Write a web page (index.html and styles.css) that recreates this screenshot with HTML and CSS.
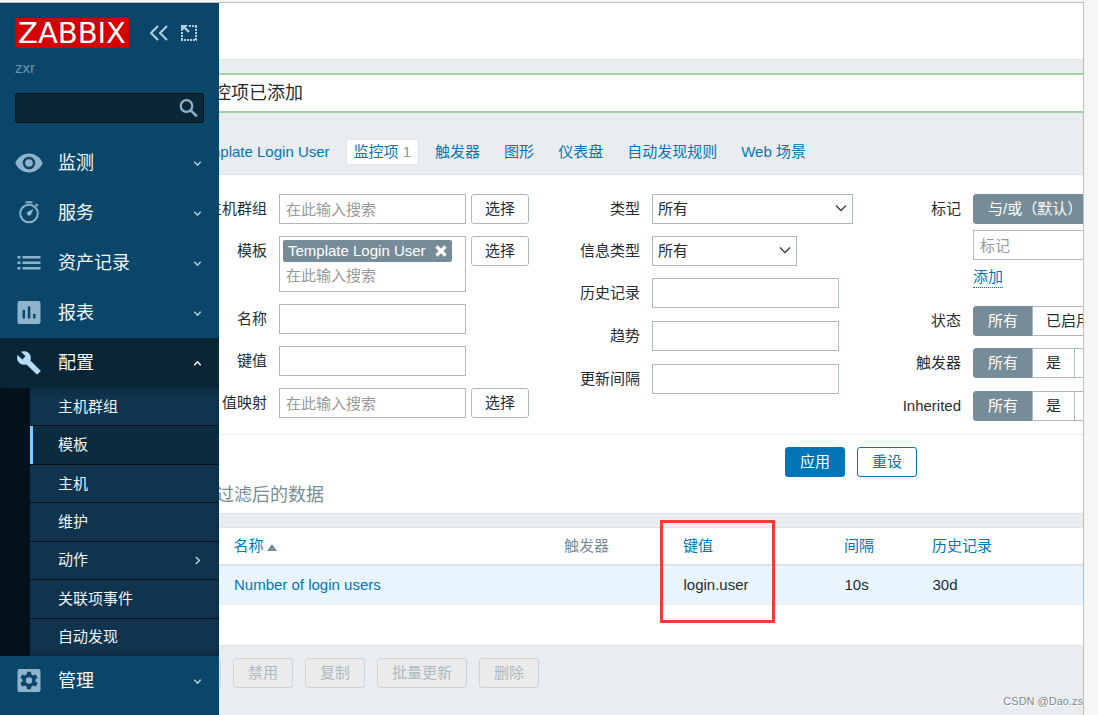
FILE: index.html
```
<!DOCTYPE html>
<html lang="zh-CN">
<head>
<meta charset="utf-8">
<title>配置监控项</title>
<link rel="stylesheet" href="styles.css">
</head>
<body>
<div class="frame">
  <aside class="sidebar">
    <div class="brand">
      <a class="logo" href="#">ZABBIX</a>
      <div class="brand-tools">
        <button class="icon-btn" type="button" aria-label="收起侧边栏">
          <svg width="20" height="18" viewBox="0 0 20 18" fill="none" stroke="currentColor" stroke-width="2"><path d="M9 2 2 9l7 7M18 2l-7 7 7 7"/></svg>
        </button>
        <button class="icon-btn" type="button" aria-label="隐藏侧边栏">
          <svg width="18" height="18" viewBox="0 0 18 18"><path d="M1 1h7L5.800 3.200l4 4-1.600 1.600-4-4L2 7H1z" fill="currentColor"/><path d="M9 2h8M16 2v14M2 8v8M1 16h16" fill="none" stroke="currentColor" stroke-width="2" stroke-dasharray="2 1"/></svg>
        </button>
      </div>
    </div>
    <div class="server-name">zxr</div>
    <form class="search" role="search">
      <input class="search-input" type="text" aria-label="搜索">
      <button class="icon-btn search-btn" type="submit" aria-label="搜索">
        <svg width="20" height="20" viewBox="0 0 20 20" fill="none" stroke="currentColor"><circle cx="7.500" cy="8" r="5.800" stroke-width="2.200"/><path d="m11.800 12.300 6 6" stroke-width="2.600"/></svg>
      </button>
    </form>
    <nav class="menu" aria-label="主菜单">
      <a class="menu-item" href="#">
        <svg class="menu-icon" viewBox="0 0 28 28"><path fill-rule="evenodd" d="M14 4.500C7.800 4.500 2.500 8.400.3 14c2.200 5.600 7.500 9.500 13.700 9.500s11.500-3.900 13.700-9.500C25.500 8.400 20.200 4.500 14 4.500zM14 20.300a6.300 6.300 0 1 1 0-12.600 6.300 6.300 0 0 1 0 12.600zm0-2.500a3.800 3.800 0 1 0 0-7.600 3.800 3.800 0 0 0 0 7.600z"/></svg>
        <span class="menu-text">监测</span>
        <svg class="chevron" viewBox="0 0 9 9"><path d="m1.300 2.800 3.200 3.400 3.200-3.400"/></svg>
      </a>
      <a class="menu-item" href="#">
        <svg class="menu-icon" viewBox="0 0 28 28"><path d="M10.500 2.300h7v2h-7z"/><path d="m21.500 4.300 2 2-1.500 1.500-2-2z"/><circle cx="14" cy="14.500" r="8.800" fill="none" stroke="currentColor" stroke-width="2"/><path d="m18.500 10-2.700 6a2.200 2.200 0 1 1-3.200-3.200z"/></svg>
        <span class="menu-text">服务</span>
        <svg class="chevron" viewBox="0 0 9 9"><path d="m1.300 2.800 3.200 3.400 3.200-3.400"/></svg>
      </a>
      <a class="menu-item" href="#">
        <svg class="menu-icon" viewBox="0 0 28 28"><path d="M2.500 7h3v2.500h-3zM2.500 12.500h3V15h-3zM2.500 18h3v2.500h-3zM7.500 7h18v2.500h-18zM7.500 12.500h18V15h-18zM7.500 18h18v2.500h-18z"/></svg>
        <span class="menu-text">资产记录</span>
        <svg class="chevron" viewBox="0 0 9 9"><path d="m1.300 2.800 3.200 3.400 3.200-3.400"/></svg>
      </a>
      <a class="menu-item" href="#">
        <svg class="menu-icon" viewBox="0 0 28 28"><path fill-rule="evenodd" d="M4.500 2h19a2 2 0 0 1 2 2v19a2 2 0 0 1-2 2h-19a2 2 0 0 1-2-2V4a2 2 0 0 1 2-2zM7.500 11v8.500H10V11zM12.800 7.500v12h2.500v-12zM18 15v4.500h2.500V15z"/></svg>
        <span class="menu-text">报表</span>
        <svg class="chevron" viewBox="0 0 9 9"><path d="m1.300 2.800 3.200 3.400 3.200-3.400"/></svg>
      </a>
      <div class="menu-group">
        <a class="menu-item menu-item-open" href="#" aria-expanded="true">
          <svg class="menu-icon" viewBox="0 0 28 28"><path d="m25.200 21.300-9.800-9.800c1-2.500.4-5.400-1.600-7.400-2.100-2.100-5.300-2.500-7.900-1.300l4.600 4.500-3.100 3.200-4.700-4.600c-1.200 2.500-.7 5.700 1.400 7.900 2 2 4.900 2.500 7.400 1.600l9.800 9.700c.4.500 1.100.5 1.500 0l2.400-2.400c.5-.3.500-1 0-1.400z"/></svg>
          <span class="menu-text">配置</span>
          <svg class="chevron" viewBox="0 0 9 9"><path d="m1.300 6.200 3.200-3.400 3.200 3.400"/></svg>
        </a>
        <ul class="submenu">
          <li><a class="sub-item" href="#">主机群组</a></li>
          <li><a class="sub-item sub-item-current" href="#" aria-current="page">模板</a></li>
          <li><a class="sub-item" href="#">主机</a></li>
          <li><a class="sub-item" href="#">维护</a></li>
          <li><a class="sub-item" href="#">动作<svg class="chevron" viewBox="0 0 9 9"><path d="m2.800 1 3.600 3.500L2.800 8"/></svg></a></li>
          <li><a class="sub-item" href="#">关联项事件</a></li>
          <li><a class="sub-item" href="#">自动发现</a></li>
        </ul>
      </div>
      <a class="menu-item" href="#">
        <svg class="menu-icon" viewBox="0 0 28 28"><path fill-rule="evenodd" d="M4.500 2h19a2 2 0 0 1 2 2v19a2 2 0 0 1-2 2h-19a2 2 0 0 1-2-2V4a2 2 0 0 1 2-2zM12.200 4.700l-.5 2.600-1.900 1.100-2.500-.9-1.900 3.200 2.100 1.700v2.200l-2.100 1.700 1.900 3.200 2.500-.9 1.900 1.100.5 2.600h3.600l.5-2.600 1.900-1.100 2.500.9 1.900-3.200-2.100-1.700v-2.200l2.100-1.700-1.900-3.200-2.500.9-1.900-1.100-.5-2.600zM14 16.700a3.200 3.200 0 1 0 0-6.400 3.200 3.200 0 0 0 0 6.400z"/></svg>
        <span class="menu-text">管理</span>
        <svg class="chevron" viewBox="0 0 9 9"><path d="m1.300 2.800 3.200 3.400 3.200-3.400"/></svg>
      </a>
    </nav>
  </aside>

  <main class="main">
    <div class="content">
      <header class="title-bar"></header>
      <output class="message">监控项已添加</output>
      <nav class="tabs" aria-label="模板">
        <a class="tab" href="#">Template Login User</a>
        <a class="tab tab-current" href="#">监控项 <span class="tab-count">1</span></a>
        <a class="tab" href="#">触发器</a>
        <a class="tab" href="#">图形</a>
        <a class="tab" href="#">仪表盘</a>
        <a class="tab" href="#">自动发现规则</a>
        <a class="tab" href="#">Web 场景</a>
      </nav>

      <form class="filter">
        <div class="filter-columns">
          <div class="filter-column filter-column-first">
            <div class="row">
              <label class="label" for="groups">主机群组</label>
              <div class="field"><input class="text" id="groups" type="text" placeholder="在此输入搜索"><button class="btn" type="button">选择</button></div>
            </div>
            <div class="row">
              <label class="label" for="templates">模板</label>
              <div class="field">
                <div class="multiselect">
                  <span class="chip">Template Login User
                    <button class="chip-remove" type="button" aria-label="移除"><svg width="12" height="12" viewBox="0 0 12 12" fill="none" stroke="currentColor" stroke-width="3.200"><path d="m1.500 1.500 9 9M10.500 1.500l-9 9"/></svg></button>
                  </span>
                  <input class="multiselect-input" id="templates" type="text" placeholder="在此输入搜索">
                </div>
                <button class="btn" type="button">选择</button>
              </div>
            </div>
            <div class="row"><label class="label" for="name">名称</label><div class="field"><input class="text" id="name" type="text"></div></div>
            <div class="row"><label class="label" for="key">键值</label><div class="field"><input class="text" id="key" type="text"></div></div>
            <div class="row">
              <label class="label" for="valuemap">值映射</label>
              <div class="field"><input class="text" id="valuemap" type="text" placeholder="在此输入搜索"><button class="btn" type="button">选择</button></div>
            </div>
          </div>

          <div class="filter-column filter-column-second">
            <div class="row">
              <label class="label" for="type">类型</label>
              <div class="select-box select-wide"><select class="select" id="type"><option>所有</option></select><svg class="select-arrow" viewBox="0 0 12 8"><path d="m1 1.500 5 5 5-5"/></svg></div>
            </div>
            <div class="row">
              <label class="label" for="info">信息类型</label>
              <div class="select-box select-narrow"><select class="select" id="info"><option>所有</option></select><svg class="select-arrow" viewBox="0 0 12 8"><path d="m1 1.500 5 5 5-5"/></svg></div>
            </div>
            <div class="row row-text"><label class="label" for="history">历史记录</label><input class="text" id="history" type="text"></div>
            <div class="row row-text"><label class="label" for="trends">趋势</label><input class="text" id="trends" type="text"></div>
            <div class="row row-text"><label class="label" for="delay">更新间隔</label><input class="text" id="delay" type="text"></div>
          </div>

          <div class="filter-column filter-column-third">
            <div class="row">
              <label class="label" for="tag">标记</label>
              <div class="tags">
                <div class="segments" role="radiogroup" aria-label="标记匹配">
                  <label class="segment"><input class="segment-input" type="radio" name="evaltype" checked><span class="segment-text">与/或（默认）</span></label>
                </div>
                <input class="text tag-input" id="tag" type="text" placeholder="标记">
                <div class="tag-add"><a class="dotted-link" href="#">添加</a></div>
              </div>
            </div>
            <div class="row">
              <span class="label" id="state-label">状态</span>
              <div class="segments" role="radiogroup" aria-labelledby="state-label">
                <label class="segment"><input class="segment-input" type="radio" name="state" checked><span class="segment-text">所有</span></label>
                <label class="segment"><input class="segment-input" type="radio" name="state"><span class="segment-text">已启用</span></label>
              </div>
            </div>
            <div class="row row-text">
              <span class="label" id="trigger-label">触发器</span>
              <div class="segments" role="radiogroup" aria-labelledby="trigger-label">
                <label class="segment"><input class="segment-input" type="radio" name="triggers" checked><span class="segment-text">所有</span></label>
                <label class="segment"><input class="segment-input" type="radio" name="triggers"><span class="segment-text">是</span></label>
                <label class="segment"><input class="segment-input" type="radio" name="triggers"><span class="segment-text">否</span></label>
              </div>
            </div>
            <div class="row">
              <span class="label" id="inherited-label">Inherited</span>
              <div class="segments" role="radiogroup" aria-labelledby="inherited-label">
                <label class="segment"><input class="segment-input" type="radio" name="inherited" checked><span class="segment-text">所有</span></label>
                <label class="segment"><input class="segment-input" type="radio" name="inherited"><span class="segment-text">是</span></label>
                <label class="segment"><input class="segment-input" type="radio" name="inherited"><span class="segment-text">否</span></label>
              </div>
            </div>
          </div>
        </div>
        <div class="filter-actions">
          <button class="btn btn-primary" type="button">应用</button>
          <button class="btn btn-outline" type="reset">重设</button>
        </div>
        <h2 class="subfilter">过滤后的数据</h2>
      </form>

      <section class="list">
        <table class="items">
          <colgroup>
            <col class="col-check"><col><col class="col-triggers"><col class="col-key"><col class="col-interval"><col class="col-history"><col class="col-rest">
          </colgroup>
          <thead>
            <tr>
              <th></th>
              <th><a href="#">名称<span class="sort"></span></a></th>
              <th>触发器</th>
              <th><a href="#">键值</a></th>
              <th><a href="#">间隔</a></th>
              <th><a href="#">历史记录</a></th>
              <th></th>
            </tr>
          </thead>
          <tbody>
            <tr>
              <td></td>
              <td><a href="#">Number of login users</a></td>
              <td></td>
              <td>login.user</td>
              <td>10s</td>
              <td>30d</td>
              <td></td>
            </tr>
          </tbody>
        </table>
        <div class="highlight"></div>
      </section>

      <div class="bulk">
        <button class="btn" type="button" disabled>启用</button>
        <button class="btn" type="button" disabled>禁用</button>
        <button class="btn" type="button" disabled>复制</button>
        <button class="btn" type="button" disabled>批量更新</button>
        <button class="btn" type="button" disabled>删除</button>
      </div>
    </div>
    <span class="watermark">CSDN @Dao.zs</span>
  </main>
</div>
</body>
</html>
```

FILE: styles.css
```
* {
  box-sizing: border-box;
}

body {
  margin: 0;
  padding: 2px 14px 0 0;
  min-height: 100vh;
  display: flex;
  background: #f6f6f6;
  color: #1f2c33;
  font-family: "Liberation Sans", "Noto Sans CJK SC", sans-serif;
  font-size: 15px;
  line-height: 20px;
}

a {
  color: #0275b8;
  text-decoration: none;
}

button,
input,
select {
  font: inherit;
  color: inherit;
}

.frame {
  flex: 1;
  min-width: 0;
  display: flex;
  border-top: 1px solid #bbbdbe;
  border-right: 1px solid #bbbdbe;
}

/* Sidebar */

.sidebar {
  flex: none;
  width: 219px;
  z-index: 1;
  background: #0a466a;
}

.brand {
  display: flex;
  align-items: center;
  gap: 20px;
  padding: 15px 15px 0;
}

.logo {
  width: 114px;
  background: #d40000;
  color: #fff;
  font-family: "DejaVu Sans", sans-serif;
  font-size: 29px;
  line-height: 30px;
  text-align: center;
}

.brand-tools {
  display: flex;
  gap: 11px;
}

.icon-btn {
  display: flex;
  padding: 0;
  border: 0;
  background: none;
  color: #b5d0e0;
}

.server-name {
  padding: 10px 15px 0;
  color: #6f97b0;
}

.search {
  display: flex;
  align-items: center;
  margin: 15px 15px;
  height: 30px;
  padding-right: 4px;
  background: #0a2737;
  border: 1px solid #020d14;
  border-radius: 3px;
}

.search-input {
  flex: 1;
  min-width: 0;
  border: 0;
  background: none;
  color: #fff;
  outline: 0;
}

.search-btn {
  color: #8fb3c9;
}

.menu-item {
  display: flex;
  align-items: center;
  height: 50px;
  padding: 0 17px 0 15px;
  color: #8fb3cb;
}

.menu-item-open {
  background: #092536;
  color: #b5dcf4;
}

.menu-icon {
  width: 28px;
  height: 28px;
  fill: currentColor;
}

.menu-text {
  flex: 1;
  margin-left: 15px;
  color: #f4f8fa;
  font-size: 18px;
}

.chevron {
  width: 9px;
  height: 9px;
  fill: none;
  stroke: #b5d0e0;
  stroke-width: 1.5;
}

.menu-item-open .chevron {
  stroke: #fff;
}

.submenu {
  display: grid;
  min-height: 268px;
  margin: 0;
  padding: 0 0 0 30px;
  list-style: none;
  background: linear-gradient(to right, #04131b 30px, #10344d 30px);
  box-shadow: inset 0 6px 6px -4px #04131b66, inset 0 -6px 6px -4px #04131b66;
}

.submenu li {
  display: grid;
  border-bottom: 1px solid #04131b;
}

.submenu li:last-child {
  border-bottom: 0;
}

.sub-item {
  display: flex;
  align-items: center;
  justify-content: space-between;
  padding: 8px 17px 8px 25px;
  border-left: 3px solid transparent;
  color: #f0f5f8;
}

.sub-item-current {
  background: #0b2b3e;
  border-left-color: #7fcaff;
}

/* Page content, scrolled partly beneath the sidebar */

.main {
  position: relative;
  flex: 1;
  min-width: 0;
  overflow: hidden;
  background: #e9edf0;
}

.content {
  margin-left: -60px;
}

.title-bar {
  height: 57px;
  background: #fff;
  border-bottom: 1px solid #dfe4e7;
}

.message {
  display: block;
  margin-top: 13px;
  padding: 0 36px;
  background: #fff;
  border: solid #a3d3a5;
  border-width: 2px 0;
  font-size: 18px;
  line-height: 36px;
}

.tabs {
  display: flex;
  gap: 8px;
  margin-top: 26px;
  padding: 0 25px 9px;
  white-space: nowrap;
}

.tab {
  padding: 2px 7px;
  border: 1px solid transparent;
  border-radius: 2px;
}

.tab-current {
  background: #fff;
  border-color: #dfe4e7;
}

.tab-count {
  color: #8c969b;
}

/* Filter */

.filter {
  background: #fff;
  border: solid #dfe4e7;
  border-width: 1px 0;
}

.filter-columns {
  display: flex;
  padding: 19px 0 13px;
  border-bottom: 1px solid #ebeef0;
}

.filter-column {
  flex: none;
  display: flex;
  flex-direction: column;
  gap: 12px;
}

.row {
  display: flex;
  align-items: flex-start;
  gap: 12px;
}

.row-text {
  min-height: 31px;
}

.label {
  flex: none;
  width: 108px;
  line-height: 30px;
  text-align: right;
}

.filter-column-second .label {
  width: 110px;
}

.field {
  display: flex;
  align-items: flex-start;
  gap: 5px;
}

.filter-column-first .field {
  width: 251px;
}

.text {
  width: 187px;
  height: 30px;
  padding: 0 6px;
  background: #fff;
  border: 1px solid #acbbc2;
  border-radius: 0;
}

::placeholder {
  color: #999;
  opacity: 1;
}

.multiselect {
  width: 187px;
  padding: 3px;
  border: 1px solid #acbbc2;
}

.chip {
  display: inline-flex;
  align-items: center;
  gap: 9px;
  height: 22px;
  padding: 0 5px;
  border-radius: 2px;
  background: #768d99;
  color: #fff;
  white-space: nowrap;
}

.chip-remove {
  display: flex;
  padding: 0;
  border: 0;
  background: none;
}

.multiselect-input {
  display: block;
  width: 100%;
  height: 26px;
  padding: 0 3px;
  border: 0;
}

.btn {
  height: 30px;
  padding: 0 14px;
  background: #fff;
  border: 1px solid #acbbc2;
  border-radius: 3px;
  line-height: 28px;
  white-space: nowrap;
}

.field .btn {
  padding: 0 13px;
}

.btn-primary {
  background: #0275b8;
  border-color: #0275b8;
  color: #fff;
}

.btn-outline {
  border-color: #0275b8;
  color: #0275b8;
}

.btn:disabled {
  background: #ebebeb;
  border-color: #ccd5d9;
  color: #acbbc2;
}

.select-box {
  position: relative;
}

.select-wide {
  width: 201px;
}

.select-narrow {
  width: 145px;
}

.select {
  appearance: none;
  display: block;
  width: 100%;
  height: 30px;
  padding: 0 24px 0 5px;
  background: #fff;
  border: 1px solid #acbbc2;
  border-radius: 0;
}

.select-arrow {
  position: absolute;
  top: 10px;
  right: 6px;
  width: 12px;
  height: 8px;
  fill: none;
  stroke: #333e44;
  stroke-width: 1.3;
  pointer-events: none;
}

.tags {
  display: flex;
  flex-direction: column;
  align-items: flex-start;
}

.tag-input {
  margin-top: 6px;
}

.tag-add {
  height: 34px;
  padding-top: 7px;
}

.dotted-link {
  display: block;
  border-bottom: 1px dotted #0275b8;
}

.segments {
  display: flex;
}

.segment {
  position: relative;
  display: block;
}

.segment + .segment {
  margin-left: -1px;
}

.segment-input {
  position: absolute;
  inset: 0;
  margin: 0;
  opacity: 0;
}

.segment-text {
  display: block;
  height: 30px;
  padding: 0 13px;
  border: 1px solid #acbbc2;
  line-height: 28px;
  white-space: nowrap;
}

.segment:first-child .segment-text {
  padding: 0 14px;
  border-radius: 3px 0 0 3px;
}

.segment-input:checked + .segment-text {
  background: #768d99;
  border-color: #768d99;
  color: #fff;
}

.filter-actions {
  display: flex;
  justify-content: flex-end;
  gap: 12px;
  padding: 12px 166px 0 0;
}

.subfilter {
  margin: 0;
  padding: 0 57px;
  color: #768d99;
  font-size: 18px;
  font-weight: 400;
  line-height: 36px;
}

/* Item list */

.list {
  position: relative;
  margin-top: 13px;
  padding-bottom: 40px;
  background: #fff;
  border: solid #dfe4e7;
  border-width: 1px 0;
}

.items {
  width: 100%;
  table-layout: fixed;
  border-collapse: collapse;
}

.col-check {
  width: 68px;
}

.col-triggers {
  width: 119px;
}

.col-key {
  width: 161px;
}

.col-interval {
  width: 88px;
}

.col-history {
  width: 150px;
}

.col-rest {
  width: 7px;
}

.items th,
.items td {
  padding: 0 6px;
  text-align: left;
  font-weight: 400;
  white-space: nowrap;
}

.items th {
  height: 37px;
  color: #768d99;
  border-bottom: 2px solid #dce2e5;
}

.items td {
  height: 39px;
  background: #e8f5ff;
  border-bottom: 1px solid #ebeef0;
  border-left: 1px solid #f0f8fe;
}

.sort {
  display: inline-block;
  margin-left: 3px;
  border: solid transparent;
  border-width: 0 5px 7px;
  border-bottom-color: #768d99;
}

.highlight {
  position: absolute;
  top: -8px;
  right: 308px;
  width: 115px;
  height: 103px;
  border: 3px solid #ff3838;
}

.bulk {
  display: flex;
  gap: 12px;
  padding: 12px 2px;
}

.bulk .btn {
  flex: none;
}

.watermark {
  position: absolute;
  right: 0;
  bottom: 4px;
  color: #85898c;
  font-size: 11px;
  text-shadow: 1px 1px 0 #fff;
}
```
